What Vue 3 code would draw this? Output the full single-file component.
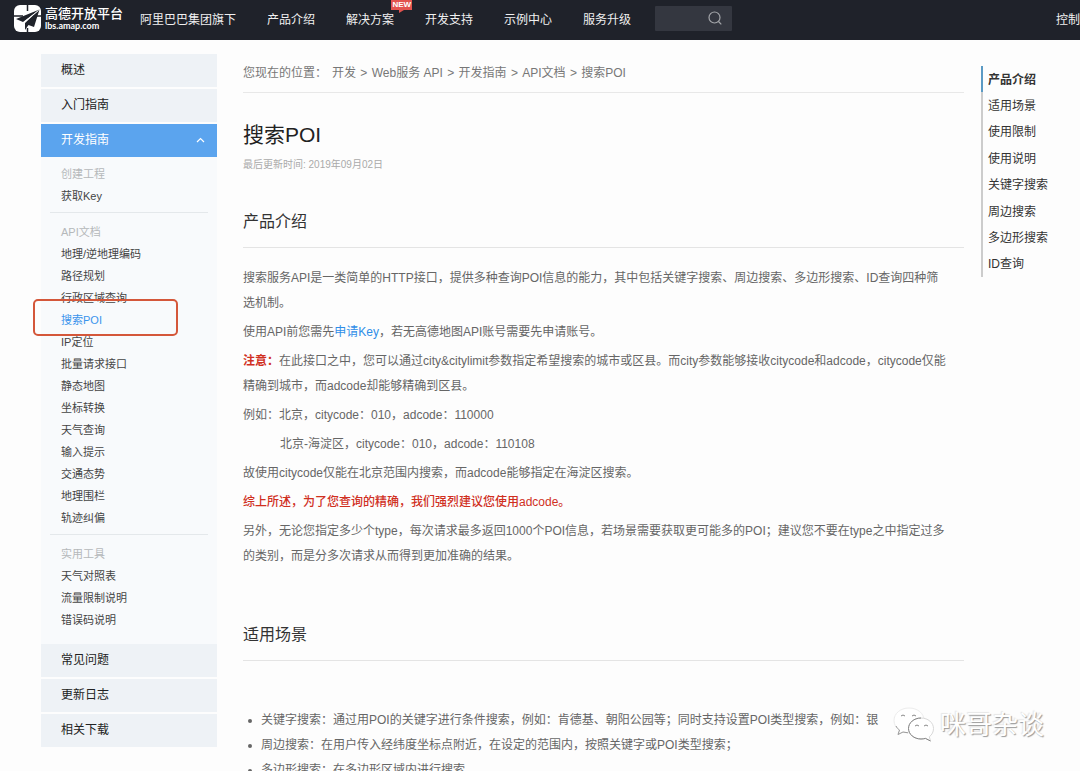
<script setup>
const navItems = [
  { label: '阿里巴巴集团旗下' },
  { label: '产品介绍' },
  { label: '解决方案', badge: 'NEW' },
  { label: '开发支持' },
  { label: '示例中心' },
  { label: '服务升级' },
]

const topSections = ['概述', '入门指南']
const bottomSections = ['常见问题', '更新日志', '相关下载']

const groups = [
  { title: '创建工程', items: ['获取Key'] },
  {
    title: 'API文档',
    items: [
      '地理/逆地理编码', '路径规划', '行政区域查询', '搜索POI', 'IP定位',
      '批量请求接口', '静态地图', '坐标转换', '天气查询', '输入提示',
      '交通态势', '地理围栏', '轨迹纠偏',
    ],
  },
  { title: '实用工具', items: ['天气对照表', '流量限制说明', '错误码说明'] },
]
const current = '搜索POI'

const crumbs = ['开发', 'Web服务 API', '开发指南', 'API文档', '搜索POI']

const toc = [
  '产品介绍', '适用场景', '使用限制', '使用说明',
  '关键字搜索', '周边搜索', '多边形搜索', 'ID查询',
]

const scenes = [
  '关键字搜索：通过用POI的关键字进行条件搜索，例如：肯德基、朝阳公园等；同时支持设置POI类型搜索，例如：银',
  '周边搜索：在用户传入经纬度坐标点附近，在设定的范围内，按照关键字或POI类型搜索；',
  '多边形搜索：在多边形区域内进行搜索',
]
</script>

<template>
  <div class="page">
    <header class="header">
      <a class="logo" href="#">
        <svg class="logo-mark" viewBox="0 0 27 27" aria-hidden="true">
          <rect width="27" height="27" rx="6" fill="#fff" />
          <path d="M13.500 0v6M0 11h9M13.500 27v-4M27 11h-5" stroke="#1f222a" stroke-width="1.500" />
          <path d="M25.500 4.500L2 14l7 3z" fill="#1f222a" />
          <path d="M25.500 4.500L11 18v7l3.500-5 5.500 2z" fill="#1f222a" />
          <path d="M24.500 5.500L9.500 17.500" stroke="#fff" stroke-width=".8" />
        </svg>
        <span class="logo-text">
          <span class="logo-name">高德开放平台</span>
          <span class="logo-domain">lbs.amap.com</span>
        </span>
      </a>
      <nav class="nav" aria-label="主导航">
        <a v-for="item in navItems" :key="item.label" class="nav-link" href="#">
          {{ item.label }}<span v-if="item.badge" class="badge">{{ item.badge }}</span>
        </a>
      </nav>
      <form class="search" role="search" @submit.prevent>
        <input class="search-input" type="text" aria-label="搜索" />
        <button class="search-button" type="submit" aria-label="提交搜索">
          <svg viewBox="0 0 14 14" fill="none" stroke="#a3a5a9" stroke-width="1.200" aria-hidden="true">
            <circle cx="6.500" cy="6.500" r="5.500" />
            <path d="M10.500 10.500l2.800 2.800" />
          </svg>
        </button>
      </form>
      <a class="nav-link console" href="#">控制</a>
    </header>

    <div class="body">
      <aside class="sidebar">
        <a v-for="s in topSections" :key="s" class="section" href="#">{{ s }}</a>
        <div>
          <a class="section active" href="#">
            开发指南
            <svg class="chevron" viewBox="0 0 9 6" fill="none" stroke="#fff" stroke-width="1.200" aria-hidden="true">
              <path d="M1 5l3.500-3.500L8 5" />
            </svg>
          </a>
          <div class="panel">
            <ul v-for="g in groups" :key="g.title" class="group">
              <li class="group-title">{{ g.title }}</li>
              <li v-for="i in g.items" :key="i" :class="{ current: i === current }">
                <a href="#">{{ i }}</a>
              </li>
            </ul>
          </div>
          <a class="section" href="#">{{ bottomSections[0] }}</a>
        </div>
        <a v-for="s in bottomSections.slice(1)" :key="s" class="section" href="#">{{ s }}</a>
      </aside>

      <main class="content">
        <nav class="crumbs" aria-label="面包屑">
          <span class="crumbs-label">您现在的位置：</span>
          <template v-for="(c, i) in crumbs" :key="c"><span v-if="i" class="sep"> &gt; </span><a href="#">{{ c }}</a></template>
        </nav>
        <h1>搜索POI</h1>
        <p class="updated">最后更新时间: 2019年09月02日</p>

        <section>
          <h2>产品介绍</h2>
          <div class="text">
            <p>搜索服务API是一类简单的HTTP接口，提供多种查询POI信息的能力，其中包括关键字搜索、周边搜索、多边形搜索、ID查询四种筛选机制。</p>
            <p>使用API前您需先<a class="link" href="#">申请Key</a>，若无高德地图API账号需要先申请账号。</p>
            <p><strong class="red">注意：</strong>在此接口之中，您可以通过city&amp;citylimit参数指定希望搜索的城市或区县。而city参数能够接收citycode和adcode，citycode仅能精确到城市，而adcode却能够精确到区县。</p>
            <p>例如：北京，citycode：010，adcode：110000</p>
            <p class="indent">北京-海淀区，citycode：010，adcode：110108</p>
            <p>故使用citycode仅能在北京范围内搜索，而adcode能够指定在海淀区搜索。</p>
            <p class="red medium">综上所述，为了您查询的精确，我们强烈建议您使用adcode。</p>
            <p>另外，无论您指定多少个type，每次请求最多返回1000个POI信息，若场景需要获取更可能多的POI；建议您不要在type之中指定过多的类别，而是分多次请求从而得到更加准确的结果。</p>
          </div>
        </section>

        <section class="scenes">
          <h2>适用场景</h2>
          <ul class="scene-list">
            <li v-for="s in scenes" :key="s">{{ s }}</li>
          </ul>
        </section>
      </main>

      <nav class="toc" aria-label="本页目录">
        <a v-for="(t, i) in toc" :key="t" href="#" :class="{ on: i === 0 }">{{ t }}</a>
      </nav>
    </div>

    <div class="watermark">
      <svg viewBox="0 0 42 36" aria-hidden="true">
        <path d="M16 1C7.500 1 1 6.500 1 13.500c0 4 2 7.500 5.500 9.500L5 27.500l5-2.500c2 .6 4 .8 6 .8 8.500 0 15-5.500 15-12.500S24.500 1 16 1z" fill="#fff" stroke="#ececec" />
        <path d="M3 19c1 2 2 3 3.500 4L5 27.500l5-2.500 5 .8" fill="none" stroke="#9a9a9a" />
        <path d="M8 9q2-2 4 0M19 9q2-2 4 0" fill="none" stroke="#888" />
        <path d="M28 11c-7 0-12.500 4.700-12.500 10.500S21 32 28 32c1.500 0 3-.2 4.500-.6l5 2.600-1.200-4.200c2.700-2 4.200-5 4.200-8.300C40.500 15.700 35 11 28 11z" fill="#fff" stroke="#d8d8d8" />
        <path d="M28 11c-7 0-12.500 4.700-12.500 10.500S21 32 28 32c1.500 0 3-.2 4.500-.6l5 2.600" fill="none" stroke="#858585" />
        <path d="M22 19q2-2 4 0M31 19q2-2 4 0" fill="none" stroke="#888" />
      </svg>
      <span>咪哥杂谈</span>
    </div>
  </div>
</template>

<style>
body {
  background: #fdfdfd;
}
</style>

<style scoped>
.page {
  position: relative;
  height: 100vh;
  overflow: hidden;
  font-family: "Liberation Sans", "Noto Sans CJK SC", sans-serif;
  font-size: 12px;
  color: #666;
}

a {
  color: inherit;
  text-decoration: none;
}

p,
h1,
h2,
ul {
  margin: 0;
  padding: 0;
}

ul {
  list-style: none;
}

.header {
  display: flex;
  align-items: center;
  height: 40px;
  padding-left: 14px;
  background: #1f222a;
  color: #f0f0f0;
  white-space: nowrap;
}

.logo {
  display: flex;
  align-items: center;
  gap: 4px;
  width: 126px;
  height: 36px;
  margin-bottom: 3px;
  color: #fff;
}

.logo-mark {
  width: 27px;
  height: 27px;
}

.logo-text {
  display: flex;
  flex-direction: column;
}

.logo-name {
  font-size: 13px;
  line-height: 14px;
  font-weight: 500;
}

.logo-domain {
  font-family: Lato, sans-serif;
  font-size: 9px;
  line-height: 9px;
  font-weight: 700;
}

.nav {
  display: flex;
  gap: 31px;
}

.nav-link {
  position: relative;
  line-height: 40px;
}

.badge {
  position: absolute;
  top: 0;
  right: -18px;
  padding: 0 1px;
  background: #e2534f;
  color: #fff;
  font-size: 8px;
  font-weight: 700;
  line-height: 10px;
}

.badge::after {
  content: "";
  position: absolute;
  top: 10px;
  left: 8px;
  border-top: 3px solid #e2534f;
  border-right: 5px solid transparent;
}

.search {
  display: flex;
  width: 77px;
  height: 25px;
  margin: 0 0 4px 24px;
  background: #343740;
  border-radius: 1px;
}

.search-input {
  flex: 1;
  min-width: 0;
  border: 0;
  padding: 0 6px;
  background: transparent;
  color: #fff;
  font: inherit;
}

.search-button {
  display: flex;
  align-items: center;
  padding: 0 10px 0 4px;
  border: 0;
  background: transparent;
}

.search-button svg {
  width: 14px;
  height: 14px;
}

.console {
  margin-left: auto;
}

.body {
  display: flex;
  align-items: flex-start;
  padding-left: 41px;
}

.sidebar {
  display: flex;
  flex-direction: column;
  gap: 2px;
  flex: none;
  width: 176px;
  margin-top: 14px;
}

.section {
  display: flex;
  align-items: center;
  justify-content: space-between;
  padding: 0 12px 1px 20px;
  background: #eef2f6;
  line-height: 32px;
  color: #222;
}

.section.active {
  background: #5ba4ee;
  color: #fff;
}

.chevron {
  width: 9px;
  height: 6px;
}

.panel {
  padding: 6px 9px 13px;
  background: #f8fafc;
  font-size: 11px;
  line-height: 22px;
  color: #444;
}

.group {
  padding-left: 11px;
}

.group + .group {
  position: relative;
  margin-top: 5px;
  padding-top: 8px;
  border-top: 1px solid #e4e8eb;
}

.group-title {
  color: #b5b8ba;
}

.current {
  position: relative;
  color: #3a94ec;
}

.current::after {
  content: "";
  position: absolute;
  top: -10px;
  left: -28px;
  width: 141px;
  height: 33px;
  border: 2px solid #d4573a;
  border-radius: 5px;
  pointer-events: none;
}

.content {
  flex: 1;
  min-width: 0;
  margin: 21px 17px 0 26px;
}

.crumbs {
  padding-bottom: 7px;
  border-bottom: 1px solid #e8e8e8;
  line-height: 24px;
  color: #777;
  white-space: pre-wrap;
}

.crumbs-label {
  margin-right: 5px;
}

.sep {
  margin: 0 1px;
}

h1 {
  margin-top: 27px;
  font-size: 21px;
  line-height: 30px;
  font-weight: 400;
  color: #222;
}

.updated {
  margin-top: 6px;
  font-size: 10px;
  line-height: 18px;
  color: #aaa;
}

h2 {
  margin-top: 36px;
  padding-bottom: 13px;
  border-bottom: 1px solid #e4e4e4;
  font-size: 16px;
  line-height: 24px;
  font-weight: 400;
  color: #333;
}

.text {
  display: flex;
  flex-direction: column;
  gap: 4px;
  margin-top: 18px;
  padding-right: 16px;
  line-height: 25px;
}

.indent {
  padding-left: 37px;
}

.link {
  color: #2f8ee8;
}

.red {
  color: #d0301f;
}

.medium {
  font-weight: 500;
}

.scenes {
  margin-top: 54px;
}

.scene-list {
  margin-top: 47px;
  padding-left: 18px;
  line-height: 25px;
  white-space: nowrap;
}

.scene-list li {
  position: relative;
}

.scene-list li::before {
  content: "";
  position: absolute;
  top: 11px;
  left: -13px;
  width: 4px;
  height: 4px;
  border-radius: 50%;
  background: #666;
}

.toc {
  display: grid;
  grid-auto-rows: 1fr;
  flex: none;
  width: 99px;
  min-height: 211px;
  margin-top: 26px;
  color: #333;
}

.toc a {
  display: flex;
  align-items: center;
  padding: 0 0 2px 5px;
  border-left: 2px solid #ccc;
}

.toc .on {
  border-color: #5b9ac4;
  font-weight: 700;
}

.watermark {
  position: absolute;
  right: 36px;
  bottom: 28px;
  display: flex;
  align-items: center;
  gap: 5px;
  color: #fff;
  font-size: 26px;
  line-height: 36px;
  text-shadow: 1px 1px 1px #999, -1px -1px 1px #e6e6e6;
}

.watermark svg {
  width: 42px;
  height: 36px;
}
</style>
